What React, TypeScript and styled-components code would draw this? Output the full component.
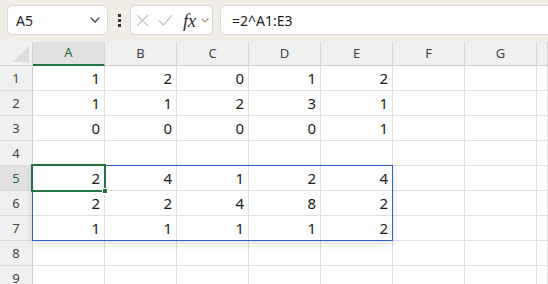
import React from "react";
import styled, { createGlobalStyle } from "styled-components";

const Global = createGlobalStyle`
  html, body { margin: 0; padding: 0; background: #ffffff; }
  body { font-family: "Noto Sans", "Liberation Sans", sans-serif; overflow: hidden; }
  * { box-sizing: border-box; }
`;

const Page = styled.div`
  width: 548px;
  height: 284px;
  overflow: hidden;
  display: flex;
  flex-direction: column;
`;

const Bar = styled.div`
  height: 42px;
  flex: none;
  background: #f1eee8;
  display: flex;
  align-items: center;
  padding: 0 0 2px 7px;
`;

const Box = styled.div<{ $w?: number }>`
  height: 30px;
  ${(p) => (p.$w ? `width: ${p.$w}px; flex: none;` : "flex: 1; margin-right: -12px;")}
  background: #ffffff;
  border: 1px solid #dcdad6;
  border-radius: 5px;
  display: flex;
  align-items: center;
`;

const NameText = styled.span`
  font-size: 14px;
  color: #222;
  margin-left: 8px;
  flex: 1;
`;

const Dots = styled.div`
  width: 22px;
  flex: none;
  display: flex;
  justify-content: center;
`;

const FxText = styled.span`
  font-family: "Liberation Serif", serif;
  font-style: italic;
  font-size: 19px;
  color: #333;
  margin-left: 10px;
  letter-spacing: -0.5px;
  line-height: 1;
`;

const Formula = styled.span`
  font-size: 14px;
  color: #222;
  margin-left: 11px;
`;

const Spacer = styled.div<{ $w: number }>`
  width: ${(p) => p.$w}px;
  flex: none;
`;

const GridWrap = styled.div`
  position: relative;
  flex: 1;
`;

const Grid = styled.div`
  display: grid;
  grid-template-columns: 33px repeat(7, 72px) 1fr;
  grid-template-rows: 24px repeat(9, 25px);
`;

const Corner = styled.div`
  background: #f0f0f0;
  border-right: 1px solid #cfcfcf;
  border-bottom: 1px solid #cfcfcf;
  display: flex;
  align-items: flex-end;
  justify-content: flex-end;
  padding: 0 3px 3px 0;
`;

const ColHead = styled.div<{ $active?: boolean }>`
  background: ${(p) => (p.$active ? "#e1e1e1" : "#f0f0f0")};
  border-right: 1px solid #d8d8d8;
  border-bottom: ${(p) => (p.$active ? "2px solid #217346" : "1px solid #cfcfcf")};
  color: ${(p) => (p.$active ? "#1e6b43" : "#444")};
  font-size: 13px;
  display: flex;
  align-items: center;
  justify-content: center;
  padding-bottom: 2px;
`;

const RowHead = styled.div<{ $active?: boolean }>`
  background: ${(p) => (p.$active ? "#e1e1e1" : "#f0f0f0")};
  border-right: 1px solid #cfcfcf;
  border-bottom: 1px solid #dcdcdc;
  color: ${(p) => (p.$active ? "#1e6b43" : "#444")};
  font-size: 13px;
  display: flex;
  align-items: center;
  justify-content: center;
`;

const Cell = styled.div`
  border-right: 1px solid #e0e0e0;
  border-bottom: 1px solid #e0e0e0;
  font-size: 15px;
  color: #1a1a1a;
  display: flex;
  align-items: center;
  justify-content: flex-end;
  padding-right: 4px;
`;

const Range = styled.div`
  position: absolute;
  left: 32px;
  top: 123px;
  width: 361px;
  height: 76px;
  border: 1px solid #2b64c8;
  box-shadow: 0 3px 8px rgba(0, 0, 0, 0.12);
  pointer-events: none;
`;

const Active = styled.div`
  position: absolute;
  left: 31px;
  top: 122px;
  width: 75px;
  height: 28px;
  border: 2px solid #217346;
  pointer-events: none;
`;

const Handle = styled.div`
  position: absolute;
  left: 102px;
  top: 146px;
  width: 6px;
  height: 6px;
  background: #217346;
  border: 1px solid #ffffff;
  pointer-events: none;
`;

const cols = ["A", "B", "C", "D", "E", "F", "G", ""];
const data: (number | null)[][] = [
  [1, 2, 0, 1, 2],
  [1, 1, 2, 3, 1],
  [0, 0, 0, 0, 1],
  [],
  [2, 4, 1, 2, 4],
  [2, 2, 4, 8, 2],
  [1, 1, 1, 1, 2],
  [],
  [],
];

const Chevron = ({ size = 10, color = "#444" }: { size?: number; color?: string }) => (
  <svg width={size} height={size * 0.6} viewBox="0 0 10 6">
    <path d="M1 1 L5 5 L9 1" fill="none" stroke={color} strokeWidth="1.3" strokeLinecap="round" strokeLinejoin="round" />
  </svg>
);

export default function App() {
  return (
    <Page>
      <Global />
      <Bar>
        <Box $w={101}>
          <NameText>A5</NameText>
          <Chevron />
          <Spacer $w={7} />
        </Box>
        <Dots>
          <svg width="3" height="13" viewBox="0 0 3 13">
            <rect x="0" y="0" width="3" height="3" fill="#333" />
            <rect x="0" y="5" width="3" height="3" fill="#333" />
            <rect x="0" y="10" width="3" height="3" fill="#333" />
          </svg>
        </Dots>
        <Box $w={83}>
          <Spacer $w={5} />
          <svg width="13" height="13" viewBox="0 0 13 13">
            <path d="M1 1 L12 12 M12 1 L1 12" stroke="#c4c4c4" strokeWidth="1.2" fill="none" />
          </svg>
          <Spacer $w={9} />
          <svg width="15" height="12" viewBox="0 0 15 12">
            <path d="M1 6.5 L5.5 11 L14 1" stroke="#c4c4c4" strokeWidth="1.2" fill="none" />
          </svg>
          <FxText>fx</FxText>
          <Spacer $w={5} />
          <Chevron size={8} color="#888" />
        </Box>
        <Spacer $w={7} />
        <Box>
          <Formula>=2^A1:E3</Formula>
        </Box>
      </Bar>
      <GridWrap>
        <Grid>
          <Corner>
            <svg width="16" height="16" viewBox="0 0 16 16">
              <path d="M16 0 L16 16 L0 16 Z" fill="#dcdcdc" />
            </svg>
          </Corner>
          {cols.map((c, i) => (
            <ColHead key={"h" + i} $active={c === "A"}>
              {c}
            </ColHead>
          ))}
          {data.map((row, r) => (
            <React.Fragment key={"r" + r}>
              <RowHead $active={r === 4}>{r + 1}</RowHead>
              {cols.map((_, c) => (
                <Cell key={c}>{row[c] ?? ""}</Cell>
              ))}
            </React.Fragment>
          ))}
        </Grid>
        <Range />
        <Active />
        <Handle />
      </GridWrap>
    </Page>
  );
}
